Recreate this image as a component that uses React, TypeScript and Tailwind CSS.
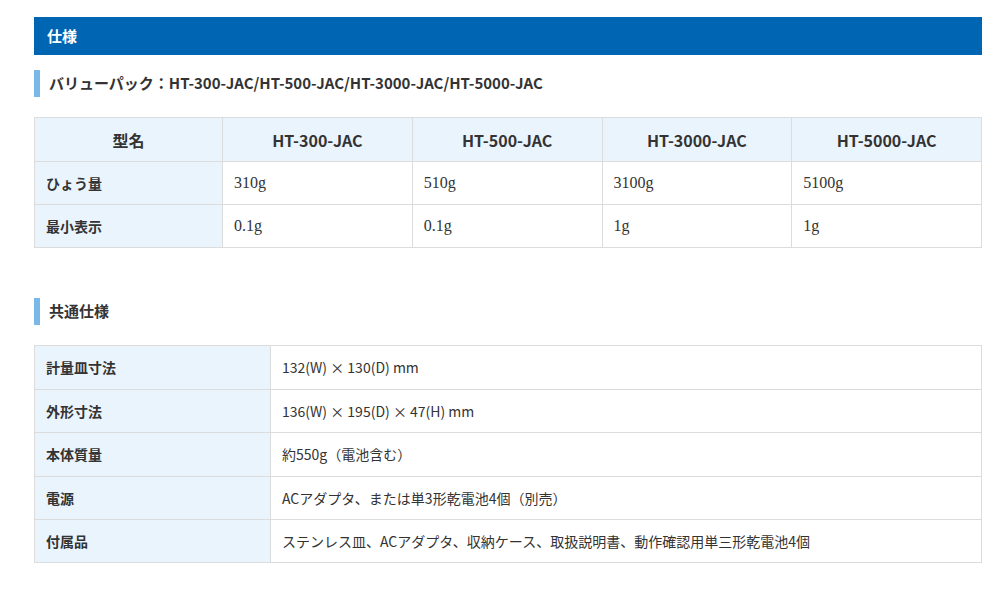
import React from "react";

const sans = { fontFamily: '"Noto Sans CJK JP", "Noto Sans", sans-serif' };

const models = ["HT-300-JAC", "HT-500-JAC", "HT-3000-JAC", "HT-5000-JAC"];
const rows1: [string, string[]][] = [
  ["ひょう量", ["310g", "510g", "3100g", "5100g"]],
  ["最小表示", ["0.1g", "0.1g", "1g", "1g"]],
];
const rows2: [string, string, string][] = [
  ["計量皿寸法", "132(W) × 130(D) mm", "h-[44px]"],
  ["外形寸法", "136(W) × 195(D) × 47(H) mm", "h-[43px]"],
  ["本体質量", "約550g（電池含む）", "h-[44px]"],
  ["電源", "ACアダプタ、または単3形乾電池4個（別売）", "h-[43px]"],
  ["付属品", "ステンレス皿、ACアダプタ、収納ケース、取扱説明書、動作確認用単三形乾電池4個", "h-[43px]"],
];

function SubHeading({ children }: { children: React.ReactNode }) {
  return (
    <div className="flex items-center h-[27px]">
      <div className="w-[6px] h-[27px] bg-[#7ab8e8]" />
      <div className="ml-[9px] text-[15px] font-bold text-[#333]">{children}</div>
    </div>
  );
}

export default function App() {
  return (
    <div className="w-[999px] h-[593px] bg-white" style={sans}>
      <div className="ml-[34px] w-[948px] pt-[17px]">
        <div className="h-[38px] bg-[#0066b3] flex items-center pl-[13px] text-white font-bold text-[15px]">
          仕様
        </div>

        <div className="mt-[15px]">
          <SubHeading>バリューパック：HT-300-JAC/HT-500-JAC/HT-3000-JAC/HT-5000-JAC</SubHeading>
        </div>

        <div className="mt-[20px] border-l border-t border-[#dcdcdc] grid grid-cols-[188px_1fr_1fr_1fr_1fr]">
          <div className="h-[44px] border-r border-b border-[#dcdcdc] bg-[#eaf4fd] flex items-center justify-center text-[16px] font-bold text-[#333]">
            型名
          </div>
          {models.map((m) => (
            <div
              key={m}
              className="h-[44px] border-r border-b border-[#dcdcdc] bg-[#eaf4fd] flex items-center justify-center text-[16px] font-bold text-[#333]"
            >
              {m}
            </div>
          ))}
          {rows1.map(([label, vals]) => (
            <React.Fragment key={label}>
              <div className="h-[43px] border-r border-b border-[#dcdcdc] bg-[#eaf4fd] flex items-center pl-[11px] text-[14px] font-bold text-[#333]">
                {label}
              </div>
              {vals.map((v, i) => (
                <div
                  key={i}
                  className="h-[43px] border-r border-b border-[#dcdcdc] bg-white flex items-center pl-[11px] text-[16px] text-[#333]"
                  style={{ fontFamily: '"Liberation Serif", "Noto Serif CJK JP", serif' }}
                >
                  {v}
                </div>
              ))}
            </React.Fragment>
          ))}
        </div>

        <div className="mt-[50px]">
          <SubHeading>共通仕様</SubHeading>
        </div>

        <div className="mt-[20px] border-l border-t border-[#dcdcdc] grid grid-cols-[236px_1fr]">
          {rows2.map(([label, val, h]) => (
            <React.Fragment key={label}>
              <div
                className={`${h} border-r border-b border-[#dcdcdc] bg-[#eaf4fd] flex items-center pl-[11px] text-[14px] font-bold text-[#333]`}
              >
                {label}
              </div>
              <div
                className={`${h} border-r border-b border-[#dcdcdc] bg-white flex items-center pl-[11px] text-[14px] text-[#333]`}
              >
                {val}
              </div>
            </React.Fragment>
          ))}
        </div>
      </div>
    </div>
  );
}
